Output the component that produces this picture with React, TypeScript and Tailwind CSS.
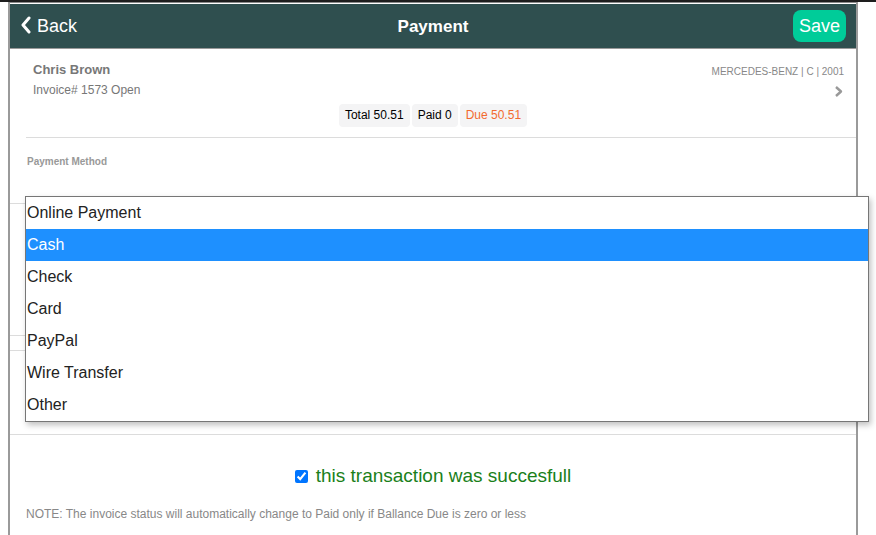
import React from "react";

const methods = ["Online Payment", "Cash", "Check", "Card", "PayPal", "Wire Transfer", "Other"];

const Badge = ({ label, className = "" }: { label: string; className?: string }) => (
  <span className={`rounded-[4px] bg-[#f4f4f5] px-[6px] leading-[23px] h-[23px] text-[12px] ${className}`}>{label}</span>
);

export default function App() {
  const selected = "Cash";

  return (
    <div className="relative h-[535px] w-full overflow-hidden bg-white font-['Liberation_Sans',Arial,sans-serif]">
      <div className="h-[2px] w-full bg-[#1e1e1e]" />
      <div className="ml-[8px] w-[850px] h-[533px] border-x-2 border-[#9a9a9a] border-t border-t-[#8a8a8a] pt-[1px]">
        {/* header */}
        <div className="flex h-[45px] items-center bg-[#2f4f4f] border-b border-[#999] px-[10px]">
          <div className="w-[90px]">
            <button className="flex items-center gap-[5px] text-[18px] text-white">
              <svg width="12" height="18" viewBox="0 0 12 18" className="mt-[-3px]">
                <polyline points="9,2 3,9 9,16" fill="none" stroke="white" strokeWidth="3" strokeLinecap="round" strokeLinejoin="round" />
              </svg>
              Back
            </button>
          </div>
          <h1 className="flex-1 pt-[2px] text-center text-[17px] font-bold text-white">Payment</h1>
          <div className="flex w-[90px] justify-end">
            <button className="h-[32px] rounded-[8px] bg-[#00cc99] px-[6px] text-[18px] text-white">Save</button>
          </div>
        </div>

        {/* customer */}
        <div className="relative px-[23px] pt-[13px]">
          <div className="text-[13px] font-bold text-[#777] leading-[16px]">Chris Brown</div>
          <div className="mt-[5px] text-[12px] text-[#777] leading-[14px]">Invoice# 1573 Open</div>
          <div className="absolute right-[12px] top-[15px] text-[10px] text-[#888]">MERCEDES-BENZ | C | 2001</div>
          <svg className="absolute right-[13px] top-[36px]" width="9" height="13" viewBox="0 0 9 13">
            <polyline points="2,2 7,6.5 2,11" fill="none" stroke="#999" strokeWidth="2.4" strokeLinejoin="round" />
          </svg>
          <div className="mt-[7px] flex justify-center gap-[2px] text-black">
            <Badge label="Total 50.51" />
            <Badge label="Paid 0" />
            <Badge label="Due 50.51" className="text-[#f26a2e]" />
          </div>
        </div>
        <div className="ml-[16px] mt-[10px] border-t border-[#dcdcdc]" />

        {/* payment method */}
        <div className="px-[17px] pt-[16px] text-[10px] font-bold text-[#999]">Payment Method</div>
        <div className="h-[35px] border-b border-[#dcdcdc]" />
        <div className="h-[132px] border-b border-[#dcdcdc]" />
        <div className="h-[15px] border-b border-[#dcdcdc]" />
        <div className="h-[84px] border-b border-[#dcdcdc]" />

        <label className="mt-[27px] flex items-center justify-center gap-[8px]">
          <input type="checkbox" checked readOnly className="h-[13px] w-[13px] accent-[#0075ff]" />
          <span className="text-[19px] text-[#1a801a]">this transaction was succesfull</span>
        </label>
        <p className="mt-[14px] px-[16px] text-[12px] text-[#888]">
          NOTE: The invoice status will automatically change to Paid only if Ballance Due is zero or less
        </p>
      </div>

      {/* open dropdown list */}
      <ul className="absolute left-[25px] top-[196px] w-[844px] border border-[#767676] bg-white shadow-[2px_3px_6px_rgba(0,0,0,0.25)]">
        {methods.map((m) => (
          <li
            key={m}
            className={`h-[32px] px-[1px] text-[16px] leading-[32px] ${
              m === selected ? "bg-[#1e90ff] text-white" : "text-[#222]"
            }`}
          >
            {m}
          </li>
        ))}
      </ul>
    </div>
  );
}
